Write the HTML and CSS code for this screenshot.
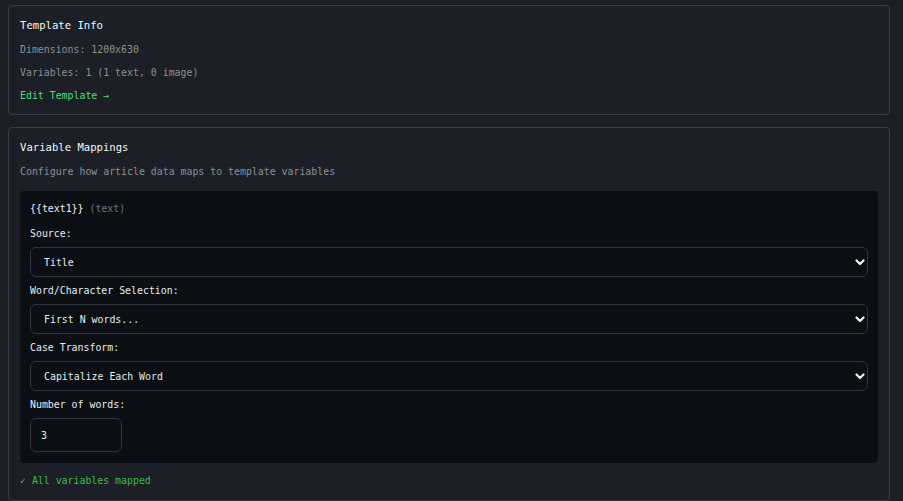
FILE: index.html
```html
<!DOCTYPE html>
<html lang="en">
<head>
<meta charset="utf-8">
<title>Template Mapping</title>
<link rel="stylesheet" href="styles.css">
</head>
<body>
<div class="page">
  <section class="card">
    <h3 class="card-title">Template Info</h3>
    <p class="muted">Dimensions: 1200x630</p>
    <p class="muted">Variables: 1 (1 text, 0 image)</p>
    <a class="link" href="#">Edit Template →</a>
  </section>

  <section class="card">
    <h3 class="card-title">Variable Mappings</h3>
    <p class="muted">Configure how article data maps to template variables</p>
    <div class="mapping">
      <div class="var-name"><span class="var-key">{{text1}}</span> <span class="var-type">(text)</span></div>
      <div class="field">
        <label class="field-label">Source:</label>
        <select class="select"><option>Title</option></select>
      </div>
      <div class="field">
        <label class="field-label">Word/Character Selection:</label>
        <select class="select"><option>First N words...</option></select>
      </div>
      <div class="field">
        <label class="field-label">Case Transform:</label>
        <select class="select"><option>Capitalize Each Word</option></select>
      </div>
      <div class="field field-last">
        <label class="field-label">Number of words:</label>
        <input class="number" type="text" value="3">
      </div>
    </div>
    <p class="status">✓ All variables mapped</p>
  </section>
</div>
</body>
</html>
```

FILE: styles.css
```css
* { box-sizing: border-box; }
html, body { margin: 0; padding: 0; }
body {
  background: #1b1e25;
  font-family: "DejaVu Sans Mono", "Liberation Mono", monospace;
  font-size: 9.9px;
  color: #e6edf3;
  overflow: hidden;
}
.page {
  padding: 5px 13px 0 8px;
  display: flex;
  flex-direction: column;
  gap: 12px;
}
.card {
  border: 1px solid #3a3e44;
  border-radius: 4px;
  padding: 11px;
  background: #1c1f26;
}
.card + .card { padding-bottom: 12px; }
.card-title {
  margin: 0 0 10px;
  font-size: 10.6px;
  line-height: 16px;
  font-weight: normal;
  color: #f2f6fa;
}
.muted {
  margin: 0 0 9px;
  line-height: 14px;
  color: #8a9097;
}
.link {
  display: block;
  line-height: 14px;
  color: #4ade80;
  text-decoration: none;
}
.mapping {
  margin-top: 12px;
  background: #0b0e12;
  border-radius: 4px;
  padding: 11px 10px 11px 10px;
}
.var-name {
  line-height: 14px;
  margin-bottom: 11px;
}
.var-key { color: #f0f4f8; }
.var-type { color: #6e7681; }
.field { margin-bottom: 7px; }
.field-last { margin-bottom: 0; }
.field-label {
  display: block;
  line-height: 14px;
  margin-bottom: 6px;
  color: #e6edf3;
}
.select {
  display: block;
  width: 100%;
  height: 30px;
  appearance: none;
  -webkit-appearance: none;
  background: #0b0e12 url("data:image/svg+xml,%3Csvg xmlns='http://www.w3.org/2000/svg' width='10' height='7' viewBox='0 0 10 7'%3E%3Cpath d='M1.5 1.5 L5 5 L8.5 1.5' fill='none' stroke='%23f0f0f0' stroke-width='2.2' stroke-linecap='round' stroke-linejoin='round'/%3E%3C/svg%3E") no-repeat right 2px center;
  border: 1px solid #30353c;
  border-radius: 6px;
  padding: 0 24px 0 13px;
  font-family: inherit;
  font-size: 9.9px;
  color: #e6edf3;
}
.number {
  display: block;
  width: 92px;
  height: 34px;
  background: #0b0e12;
  border: 1px solid #30353c;
  border-radius: 6px;
  padding: 0 10px;
  font-family: inherit;
  font-size: 9.9px;
  color: #e6edf3;
}
.status {
  margin: 11px 0 0;
  line-height: 14px;
  color: #3fb950;
}
```
